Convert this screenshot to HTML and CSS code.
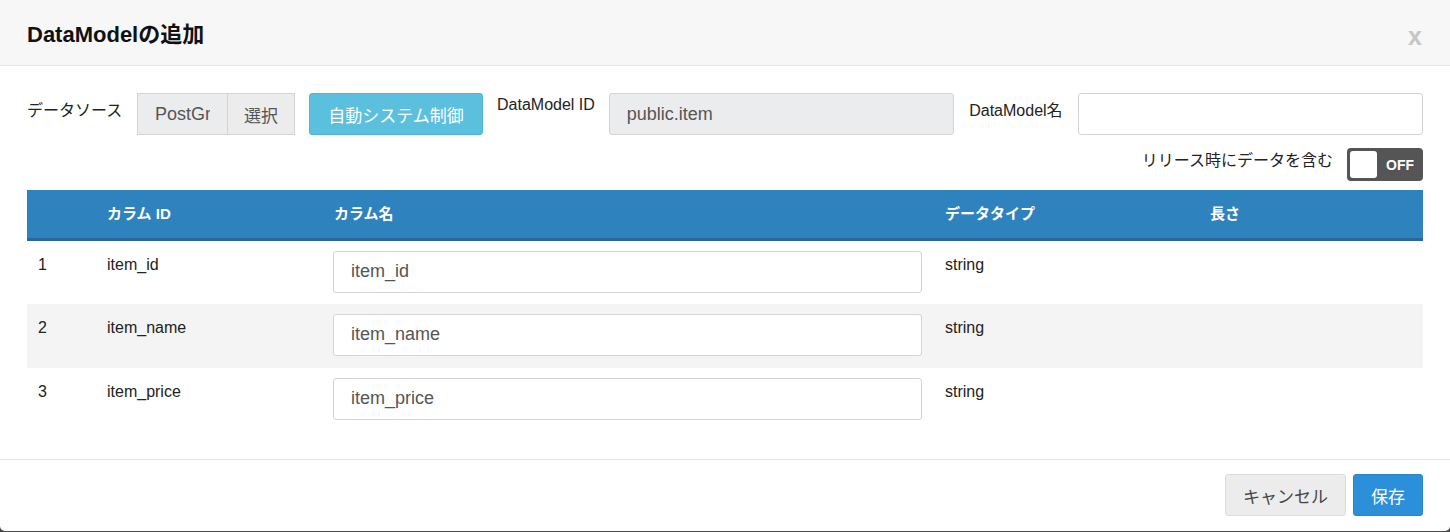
FILE: index.html
```html
<!DOCTYPE html>
<html lang="ja">
<head>
<meta charset="utf-8">
<title>DataModelの追加</title>
<link rel="stylesheet" href="styles.css">
</head>
<body>
<div class="modal">
  <div class="modal-header">
    <h1 class="modal-title">DataModelの追加</h1>
    <span class="close">x</span>
  </div>
  <div class="modal-body">
    <div class="form-row">
      <label class="lbl">データソース</label>
      <div class="input-group">
        <input class="ctl ds-input" type="text" value="PostGreSQL" readonly>
        <button class="btn btn-select">選択</button>
      </div>
      <button class="btn btn-info">自動システム制御</button>
      <label class="lbl">DataModel ID</label>
      <input class="ctl ctl-disabled grow" type="text" value="public.item" readonly>
      <label class="lbl lbl-name">DataModel名</label>
      <input class="ctl grow" type="text" value="">
    </div>
    <div class="toggle-row">
      <span class="toggle-lbl">リリース時にデータを含む</span>
      <div class="toggle"><span class="knob"></span><span class="toggle-text">OFF</span></div>
    </div>
    <table class="grid">
      <colgroup>
        <col class="c1"><col class="c2"><col class="c3"><col class="c4"><col class="c5">
      </colgroup>
      <thead>
        <tr><th></th><th>カラム ID</th><th>カラム名</th><th>データタイプ</th><th>長さ</th></tr>
      </thead>
      <tbody>
        <tr><td>1</td><td>item_id</td><td><input class="ctl cell-input" type="text" value="item_id"></td><td>string</td><td></td></tr>
        <tr class="alt"><td>2</td><td>item_name</td><td><input class="ctl cell-input" type="text" value="item_name"></td><td>string</td><td></td></tr>
        <tr><td>3</td><td>item_price</td><td><input class="ctl cell-input" type="text" value="item_price"></td><td>string</td><td></td></tr>
      </tbody>
    </table>
  </div>
  <div class="modal-footer">
    <button class="btn btn-cancel">キャンセル</button>
    <button class="btn btn-primary">保存</button>
  </div>
</div>
</body>
</html>
```
FILE: styles.css
```css
* { box-sizing: border-box; }
html, body { margin: 0; padding: 0; }
body {
  background: #4a4a4a;
  font-family: "Liberation Sans", Arial, "Noto Sans CJK JP", sans-serif;
  font-size: 16px;
  color: #222;
  height: 532px;
  overflow: hidden;
}
.modal {
  width: 1450px;
  height: 531px;
  background: #fff;
  border-radius: 0 0 5px 5px;
  display: flex;
  flex-direction: column;
  overflow: hidden;
}
.modal-header {
  height: 66px;
  background: #f7f7f7;
  border-bottom: 1px solid #e5e5e5;
  display: flex;
  align-items: center;
  justify-content: space-between;
  padding: 0 28px 0 27px;
}
.modal-title {
  margin: 0;
  font-size: 22px;
  font-weight: bold;
  color: #111;
  padding-bottom: 1px;
}
.close {
  font-size: 25px;
  font-weight: bold;
  color: #c6c6c6;
  line-height: 1;
  margin-top: 8px;
}
.modal-body {
  flex: 1;
  padding: 27px 27px 0 27px;
}
.form-row {
  display: flex;
  align-items: flex-start;
  gap: 14px;
  height: 42px;
}
.lbl {
  font-size: 16px;
  color: #222;
  padding-top: 3px;
  white-space: nowrap;
}
.lbl:first-child { padding-top: 4px; width: 96px; }
.lbl-name { margin-left: 1px; padding-top: 4px; margin-right: 1px; }
.ctl {
  height: 42px;
  border: 1px solid #d4d4d4;
  border-radius: 3px;
  padding: 0 17px;
  font-family: "Liberation Sans", Arial, "Noto Sans CJK JP", sans-serif;
  font-size: 18px;
  color: #555;
  background: #fff;
  outline: none;
}
.ctl-disabled, .ds-input { background: #ebecee; }
.grow { flex: 1; min-width: 0; }
.input-group { display: flex; }
.ds-input {
  width: 91px;
  border-radius: 0;
  padding: 0 17px;
}
.btn {
  height: 42px;
  font-family: "Liberation Sans", Arial, "Noto Sans CJK JP", sans-serif;
  font-size: 17px;
  border: 1px solid transparent;
  border-radius: 3px;
  cursor: pointer;
  padding: 0 16px;
}
.btn-select {
  width: 67px;
  border-radius: 0;
  background: #ececec;
  border-color: #d4d4d4;
  border-left: none;
  color: #555;
  padding: 0;
}
.btn-info {
  width: 174px;
  background: #5bc0de;
  border-color: #4cb6d6;
  color: #fff;
  padding: 0;
}
.toggle-row {
  display: flex;
  justify-content: flex-end;
  align-items: center;
  gap: 14px;
  margin-top: 13px;
  height: 33px;
}
.toggle-lbl { font-size: 16px; color: #222; margin-top: -11px; }
.toggle {
  width: 76px;
  height: 33px;
  background: #555;
  border-radius: 4px;
  display: flex;
  align-items: center;
  padding: 3px;
}
.knob {
  width: 27px;
  height: 27px;
  background: #fff;
  border-radius: 3px;
}
.toggle-text {
  color: #fff;
  font-weight: bold;
  font-size: 14px;
  margin-left: 9px;
}
.grid {
  margin-top: 9px;
  width: 100%;
  border-collapse: collapse;
  table-layout: fixed;
}
.c1 { width: 69px; }
.c2 { width: 227px; }
.c3 { width: 611px; }
.c4 { width: 265px; }
.grid th {
  background: #2e82be;
  color: #fff;
  font-weight: bold;
  font-size: 15px;
  text-align: left;
  height: 49px;
  padding: 0 11px 2px 11px;
  border-bottom: 3px solid #28689a;
  font-family: "Liberation Sans", Arial, "Noto Sans CJK JP", sans-serif;
}
.grid td {
  padding: 10px 11px 11px 11px;
  vertical-align: top;
  height: 64px;
  font-size: 16px;
  line-height: 28px;
  color: #222;
}
.grid tbody tr:first-child td { height: 63px; }
.grid tr.alt td { background: #f4f4f4; }
.cell-input { width: 100%; display: block; margin-left: -1px; }
.modal-footer {
  height: 72px;
  border-top: 1px solid #e5e5e5;
  display: flex;
  justify-content: flex-end;
  align-items: flex-start;
  gap: 7px;
  padding: 14px 27px 0 0;
}
.btn-cancel {
  width: 121px;
  background: #ececec;
  border-color: #dcdcdc;
  color: #444;
  padding: 0;
}
.btn-primary {
  width: 70px;
  background: #2b90d9;
  border-color: #2586cc;
  color: #fff;
  padding: 0;
}
```
